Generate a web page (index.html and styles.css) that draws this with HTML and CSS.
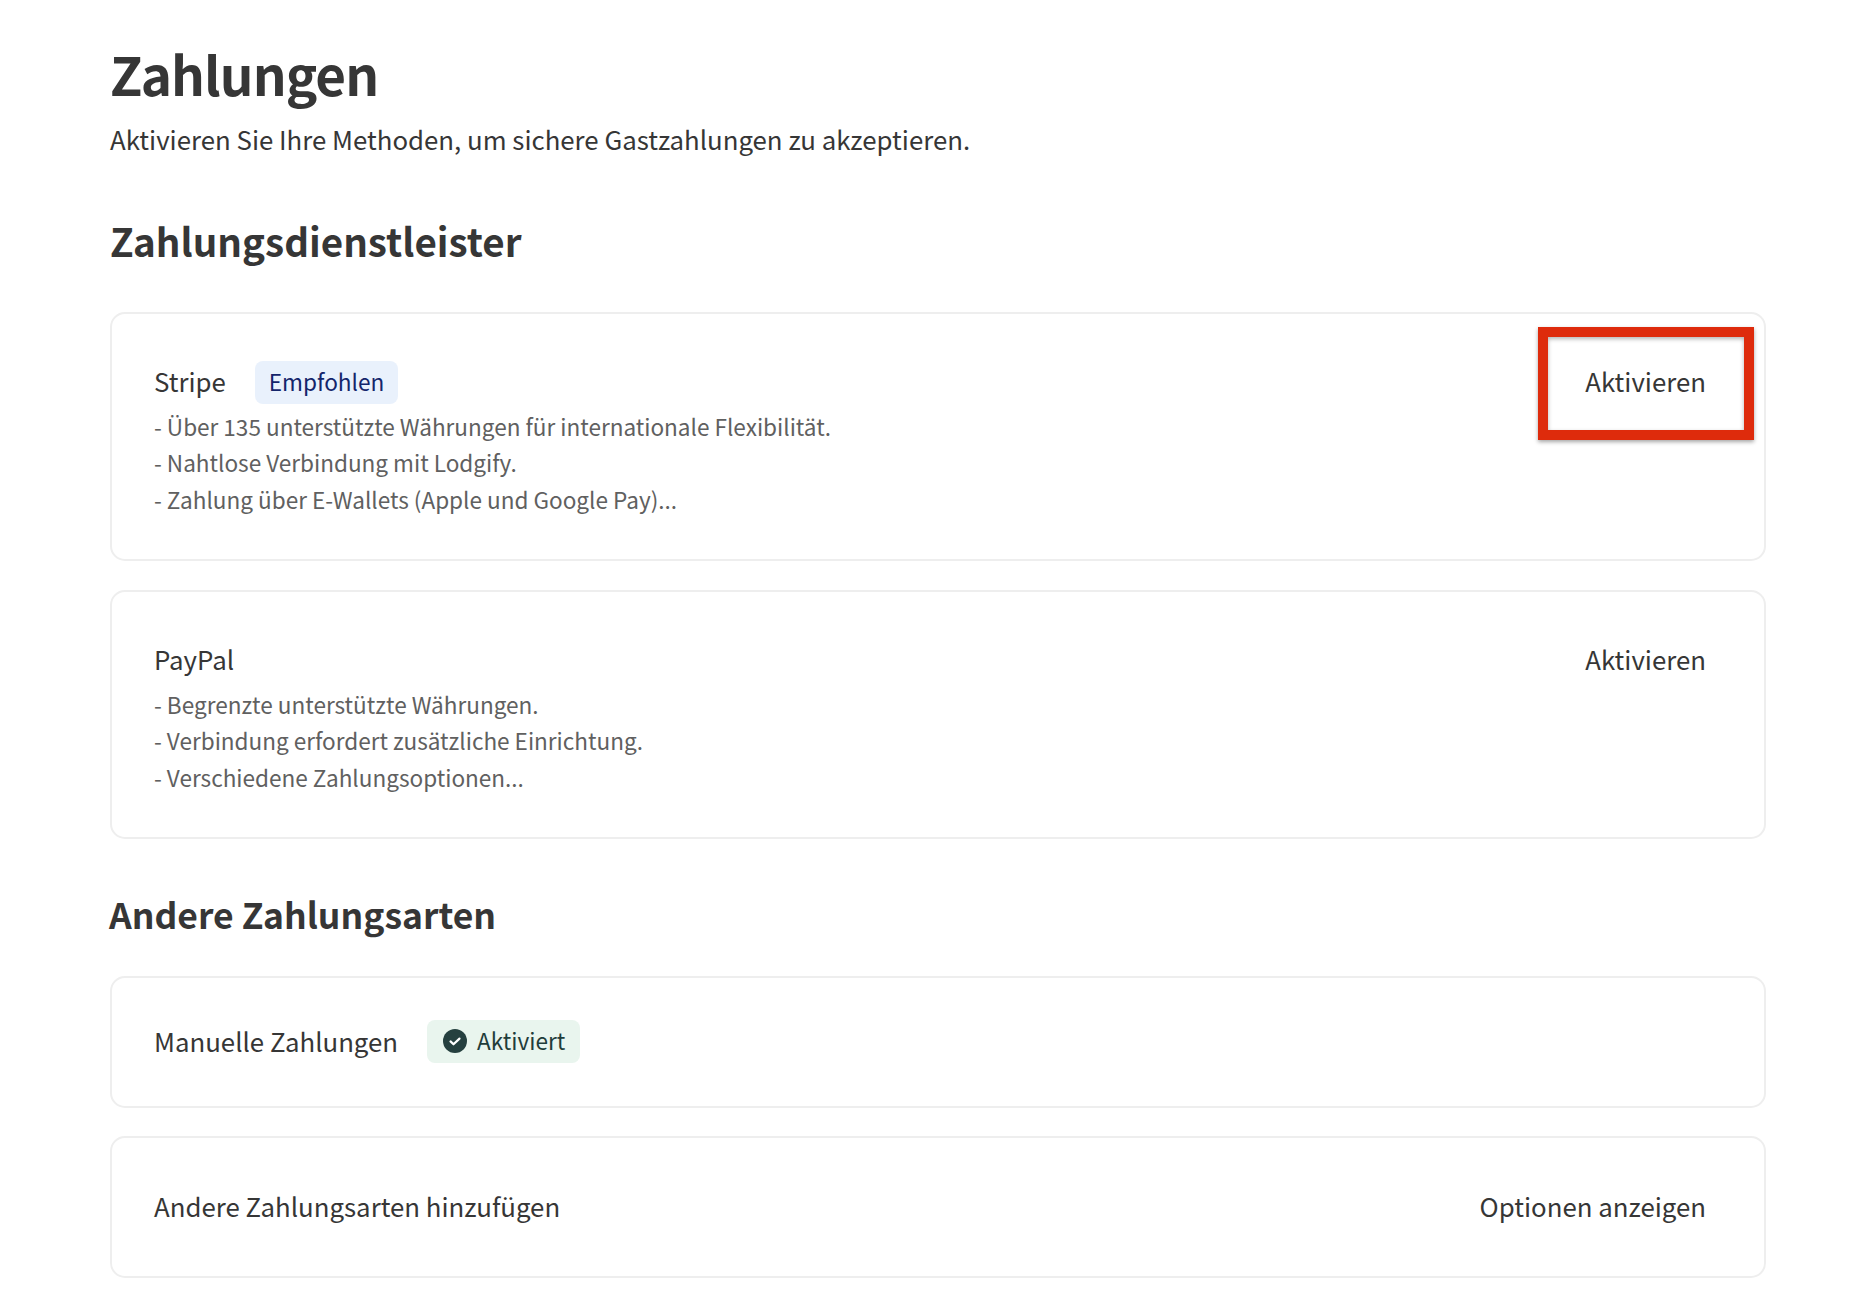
FILE: index.html
```html
<!DOCTYPE html>
<html lang="de">
<head>
<meta charset="utf-8">
<title>Zahlungen</title>
<link rel="stylesheet" href="styles.css">
</head>
<body>
<main class="page">
  <h1 class="title">Zahlungen</h1>
  <p class="subtitle">Aktivieren Sie Ihre Methoden, um sichere Gastzahlungen zu akzeptieren.</p>

  <h2 class="section-title first">Zahlungsdienstleister</h2>
  <section class="card card-tall">
    <div class="card-body">
      <div class="name-row"><span class="name">Stripe</span><span class="badge badge-blue">Empfohlen</span></div>
      <p class="desc">- Über 135 unterstützte Währungen für internationale Flexibilität.</p>
      <p class="desc">- Nahtlose Verbindung mit Lodgify.</p>
      <p class="desc">- Zahlung über E-Wallets (Apple und Google Pay)...</p>
    </div>
    <a class="action">Aktivieren</a>
    <div class="highlight"></div>
  </section>
  <section class="card card-tall">
    <div class="card-body">
      <div class="name-row"><span class="name">PayPal</span></div>
      <p class="desc">- Begrenzte unterstützte Währungen.</p>
      <p class="desc">- Verbindung erfordert zusätzliche Einrichtung.</p>
      <p class="desc">- Verschiedene Zahlungsoptionen...</p>
    </div>
    <a class="action">Aktivieren</a>
  </section>

  <h2 class="section-title second">Andere Zahlungsarten</h2>
  <section class="card card-short">
    <div class="name-row"><span class="name">Manuelle Zahlungen</span>
      <span class="badge badge-green">
        <svg class="check" viewBox="0 0 24 24" aria-hidden="true"><circle cx="12" cy="12" r="12" fill="#25403f"/><path d="M7.5 12.4l3 2.9L16.5 9.6" fill="none" stroke="#fff" stroke-width="2.2" stroke-linecap="round" stroke-linejoin="round"/></svg>
        Aktiviert</span></div>
  </section>
  <section class="card card-add">
    <span class="name">Andere Zahlungsarten hinzufügen</span>
    <a class="action">Optionen anzeigen</a>
  </section>
</main>
</body>
</html>
```

FILE: styles.css
```css
* { box-sizing: border-box; }
html, body { margin: 0; background: #fff; }
body {
  font-family: "Noto Sans CJK SC", "Noto Sans", sans-serif;
  color: #333;
  height: 1312px;
  overflow: hidden;
}
.page { padding: 38px 90px 0 110px; }
.title { margin: 0; font-size: 53px; line-height: 70px; font-weight: 700; color: #363636; letter-spacing: -0.95px; }
.subtitle { margin: 9px 0 0; font-size: 25.8px; line-height: 44px; color: #363636; }
.section-title { margin: 0; line-height: 52px; font-weight: 700; color: #363636; }
.section-title.first { font-size: 38.6px; margin-top: 53px; margin-bottom: 46px; }
.section-title.second { font-size: 35.5px; margin-top: 49px; margin-bottom: 36px; margin-left: -1px; }
.card {
  position: relative;
  display: flex;
  justify-content: space-between;
  align-items: flex-start;
  border: 2px solid #eeeeee;
  border-radius: 15px;
  margin-bottom: 28px;
  padding: 0 58px 0 42px;
  background: #fff;
}
.card-tall { height: 249px; padding-top: 45px; margin-bottom: 29px; }
.card-short { height: 132px; align-items: center; padding-bottom: 2px; }
.card-add { height: 142px; align-items: center; padding-bottom: 2px; }
.name-row { display: flex; align-items: center; gap: 29px; height: 44px; margin-bottom: 4.5px; }
.card-short .name-row { margin-bottom: 0; }
.name { font-size: 25.8px; line-height: 44px; color: #363636; }
.badge {
  display: inline-flex;
  align-items: center;
  height: 43px;
  padding: 0 14px;
  border-radius: 8px;
  font-size: 22.6px;
  line-height: 32px;
}
.badge-blue { background: #e9f1fc; color: #14256b; margin-top: 2px; }
.badge-green { background: #e9f5ee; color: #1f3d3a; padding: 0 15px 0 16px; gap: 10px; }
.check { width: 24px; height: 24px; flex: none; }
.desc { margin: 0; font-size: 22.55px; line-height: 36.5px; color: #606060; }
.action { font-size: 25.8px; line-height: 44px; color: #363636; white-space: nowrap; }
.highlight {
  position: absolute;
  left: 1426px;
  top: 13px;
  width: 216px;
  height: 113px;
  border: 10px solid #de2b0c;
  box-shadow: 0 2px 4px rgba(0,0,0,.35), inset 0 2px 4px rgba(0,0,0,.3);
}
```
